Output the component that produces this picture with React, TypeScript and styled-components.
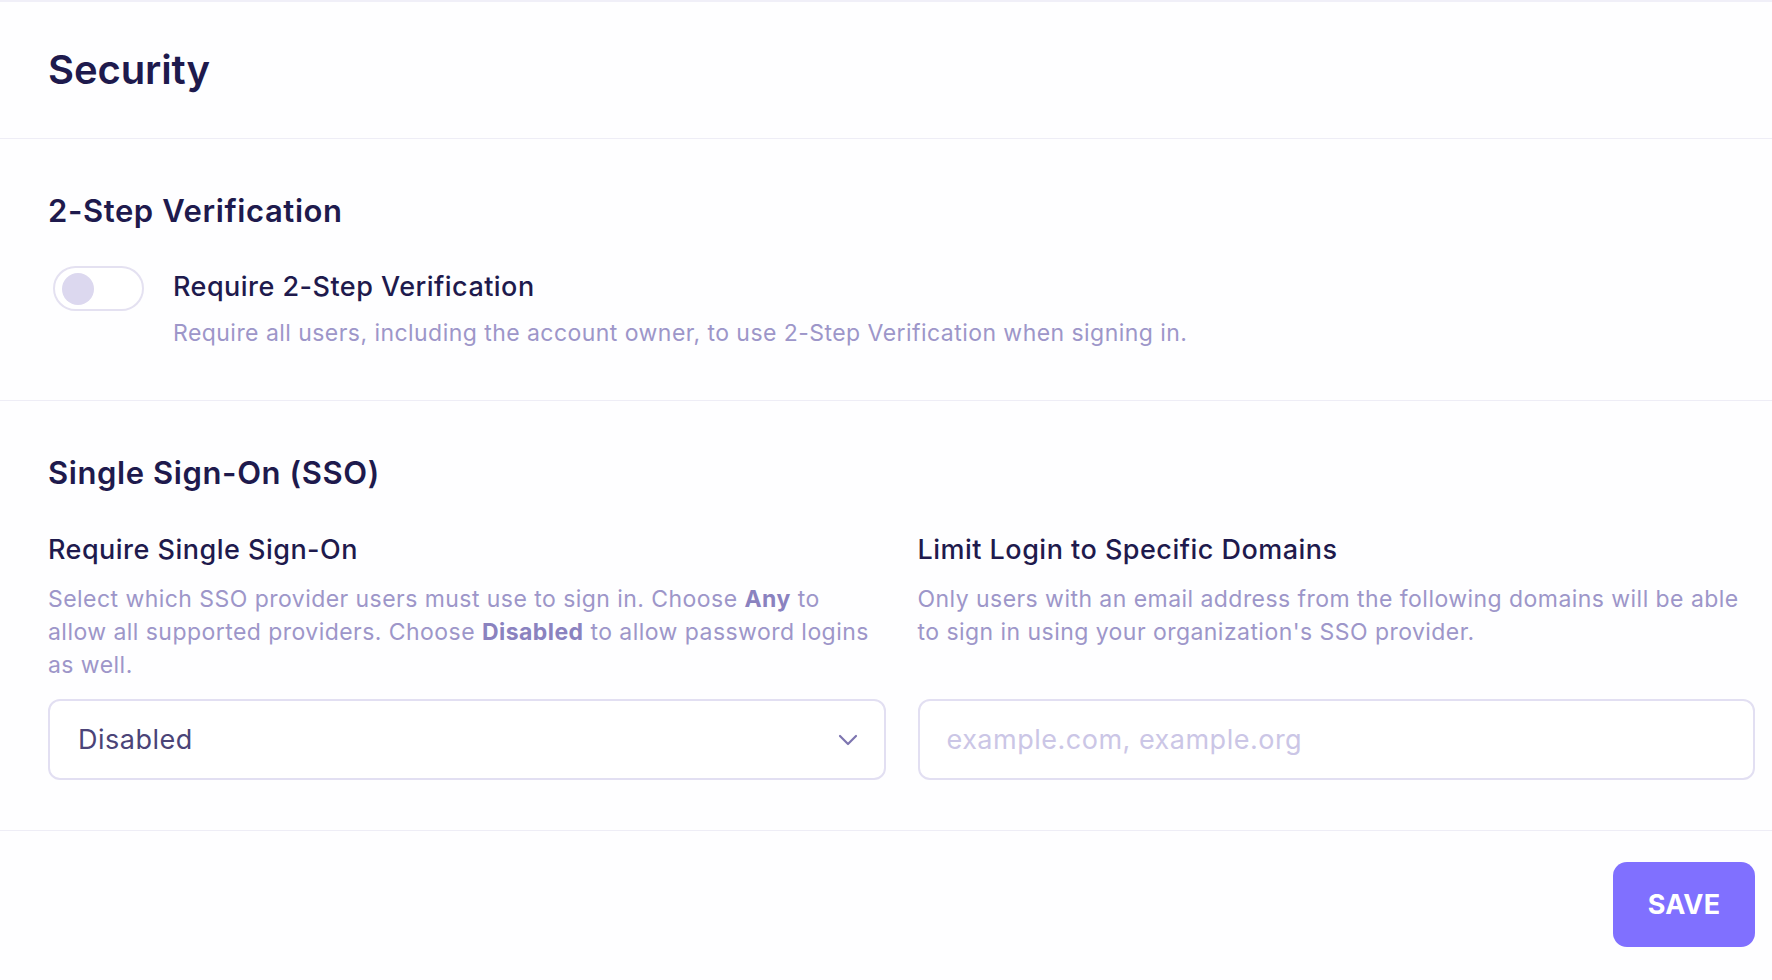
import React from "react";
import styled, { createGlobalStyle } from "styled-components";

const GlobalStyle = createGlobalStyle`
  html, body {
    margin: 0;
    padding: 0;
    background: #fefeff;
  }
  body {
    font-family: Inter, "Noto Sans", "Liberation Sans", sans-serif;
    color: #1e1a4d;
  }
  * { box-sizing: border-box; }
`;

const Page = styled.div`
  width: 1772px;
  min-height: 980px;
  border-top: 2px solid #f0eff8;
  background: #fefeff;
`;

const Section = styled.section<{ $top: number; $bottom: number }>`
  padding: ${(p) => p.$top}px 17px ${(p) => p.$bottom}px 48px;
  border-bottom: 1.5px solid #eeedf6;
`;

const PageTitle = styled.h1`
  margin: 0;
  font-size: 40px;
  line-height: 48px;
  font-weight: 600;
  color: #1e1a4d;
  letter-spacing: -0.1px;
`;

const SectionTitle = styled.h2`
  margin: 0;
  font-size: 31px;
  line-height: 38px;
  font-weight: 600;
  color: #1e1a4d;
  letter-spacing: 0.6px;
`;

const ToggleRow = styled.div`
  display: flex;
  align-items: flex-start;
  gap: 29px;
  margin-top: 36px;
`;

const ToggleTrack = styled.button<{ $on: boolean }>`
  flex: none;
  margin-left: 5px;
  width: 91px;
  height: 45px;
  padding: 0 7px;
  border: 2px solid #e4e1f1;
  border-radius: 999px;
  background: ${(p) => (p.$on ? "#8070ff" : "#ffffff")};
  display: flex;
  align-items: center;
  justify-content: ${(p) => (p.$on ? "flex-end" : "flex-start")};
  cursor: pointer;
`;

const ToggleKnob = styled.span`
  width: 32px;
  height: 32px;
  border-radius: 50%;
  background: #dcd8ef;
`;

const ToggleText = styled.div`
  display: flex;
  flex-direction: column;
  gap: 12px;
  padding-top: 3px;
`;

const OptionLabel = styled.div`
  font-size: 27px;
  line-height: 36px;
  font-weight: 500;
  letter-spacing: 0.47px;
  color: #1e1a4d;
`;

const Description = styled.p`
  margin: 0;
  font-size: 23px;
  line-height: 33px;
  font-weight: 400;
  letter-spacing: 0.45px;
  color: #9d96c9;

  strong {
    font-weight: 700;
    color: #8a82bf;
  }
`;

const FieldGrid = styled.div`
  display: grid;
  grid-template-columns: 1fr 1fr;
  column-gap: 32px;
  margin-top: 41px;
`;

const FieldLabel = styled.div`
  font-size: 27px;
  line-height: 34px;
  font-weight: 500;
  letter-spacing: 0.48px;
  color: #1e1a4d;
  margin-bottom: 16px;
`;

const FieldDescription = styled(Description)`
  margin-bottom: 17px;
  padding-right: 8px;
`;

const SelectWrap = styled.div`
  position: relative;
  height: 81px;
`;

const Select = styled.select`
  appearance: none;
  width: 100%;
  height: 100%;
  border: 2px solid #e2dff2;
  border-radius: 12px;
  background: #ffffff;
  padding: 0 70px 0 28px;
  font-family: inherit;
  font-size: 27px;
  letter-spacing: 0.5px;
  color: #4b4478;
  outline: none;
`;

const Chevron = styled.svg`
  position: absolute;
  right: 28px;
  top: 50%;
  transform: translateY(-50%);
  pointer-events: none;
`;

const TextInput = styled.input`
  width: 100%;
  height: 81px;
  border: 2px solid #e2dff2;
  border-radius: 12px;
  background: #ffffff;
  padding: 0 27px;
  font-family: inherit;
  font-size: 27px;
  letter-spacing: 0.5px;
  color: #4b4478;
  outline: none;

  &::placeholder {
    color: #cbc6e6;
  }
`;

const Footer = styled.div`
  display: flex;
  justify-content: flex-end;
  padding: 31px 17px 32px 48px;
`;

const SaveButton = styled.button`
  width: 142px;
  height: 85px;
  border: none;
  border-radius: 14px;
  background: #8070ff;
  color: #ffffff;
  font-family: inherit;
  font-size: 27px;
  font-weight: 700;
  letter-spacing: 0.2px;
  cursor: pointer;
`;

export default function App() {
  return (
    <>
      <GlobalStyle />
      <Page>
        <Section $top={44} $bottom={44}>
          <PageTitle>Security</PageTitle>
        </Section>

        <Section $top={53} $bottom={50}>
          <SectionTitle>2-Step Verification</SectionTitle>
          <ToggleRow>
            <ToggleTrack $on={false} aria-label="Require 2-Step Verification">
              <ToggleKnob />
            </ToggleTrack>
            <ToggleText>
              <OptionLabel>Require 2-Step Verification</OptionLabel>
              <Description>
                Require all users, including the account owner, to use 2-Step Verification when signing in.
              </Description>
            </ToggleText>
          </ToggleRow>
        </Section>

        <Section $top={53} $bottom={50}>
          <SectionTitle>Single Sign-On (SSO)</SectionTitle>
          <FieldGrid>
            <FieldLabel>Require Single Sign-On</FieldLabel>
            <FieldLabel>Limit Login to Specific Domains</FieldLabel>
            <FieldDescription>
              Select which SSO provider users must use to sign in. Choose <strong>Any</strong> to allow all
              supported providers. Choose <strong>Disabled</strong> to allow password logins as well.
            </FieldDescription>
            <FieldDescription>
              Only users with an email address from the following domains will be able to sign in using your
              organization's SSO provider.
            </FieldDescription>
            <SelectWrap>
              <Select defaultValue="disabled">
                <option value="disabled">Disabled</option>
                <option value="any">Any</option>
              </Select>
              <Chevron width="20" height="12" viewBox="0 0 20 12" fill="none">
                <path d="M2 2 L10 10 L18 2" stroke="#7d75b0" strokeWidth="2.2" strokeLinecap="round" strokeLinejoin="round" />
              </Chevron>
            </SelectWrap>
            <TextInput placeholder="example.com, example.org" />
          </FieldGrid>
        </Section>

        <Footer>
          <SaveButton>SAVE</SaveButton>
        </Footer>
      </Page>
    </>
  );
}
